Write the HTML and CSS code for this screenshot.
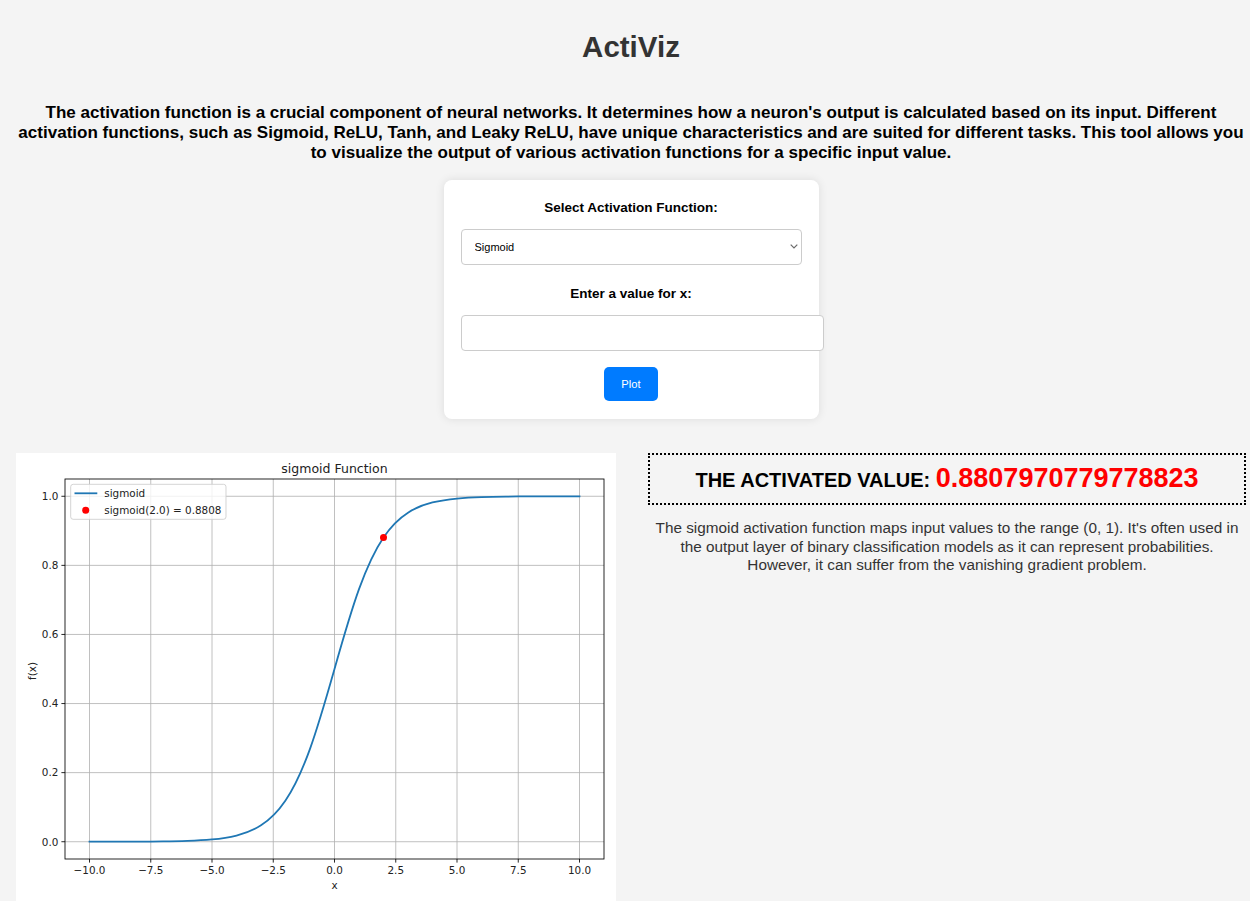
FILE: index.html
```html
<!DOCTYPE html>
<html lang="en">
<head>
<meta charset="utf-8">
<title>ActiViz</title>
<link rel="stylesheet" href="styles.css">
</head>
<body>
<div class="page">
  <h1 class="title">ActiViz</h1>
  <p class="intro">The activation function is a crucial component of neural networks. It determines how a neuron's output is calculated based on its input. Different activation functions, such as Sigmoid, ReLU, Tanh, and Leaky ReLU, have unique characteristics and are suited for different tasks. This tool allows you to visualize the output of various activation functions for a specific input value.</p>

  <form class="card">
    <label class="field-label" for="fn">Select Activation Function:</label>
    <div class="select-wrap">
      <select id="fn" class="select">
        <option>Sigmoid</option>
        <option>ReLU</option>
        <option>Tanh</option>
        <option>Leaky ReLU</option>
      </select>
      <svg class="chevron" width="8" height="5" viewBox="0 0 8 5"><path d="M0.7,0.7 L4,4 L7.3,0.7" fill="none" stroke="#6b6b6b" stroke-width="1.2"/></svg>
    </div>
    <label class="field-label" for="xval">Enter a value for x:</label>
    <input id="xval" class="text-input" type="text">
    <button type="button" class="plot-btn">Plot</button>
  </form>

  <div class="results">
    <div class="plot">
      <svg class="chart" width="600" height="450" viewBox="0 0 600 450">
        <rect x="0" y="0" width="600" height="450" fill="#ffffff"/>
        <g class="grid" stroke="#b0b0b0" stroke-width="0.8">
          <line x1="73.5" y1="26" x2="73.5" y2="406"/>
          <line x1="134.75" y1="26" x2="134.75" y2="406"/>
          <line x1="196" y1="26" x2="196" y2="406"/>
          <line x1="257.25" y1="26" x2="257.25" y2="406"/>
          <line x1="318.5" y1="26" x2="318.5" y2="406"/>
          <line x1="379.75" y1="26" x2="379.75" y2="406"/>
          <line x1="441" y1="26" x2="441" y2="406"/>
          <line x1="502.25" y1="26" x2="502.25" y2="406"/>
          <line x1="563.5" y1="26" x2="563.5" y2="406"/>
          <line x1="49" y1="388.73" x2="588" y2="388.73"/>
          <line x1="49" y1="319.64" x2="588" y2="319.64"/>
          <line x1="49" y1="250.55" x2="588" y2="250.55"/>
          <line x1="49" y1="181.45" x2="588" y2="181.45"/>
          <line x1="49" y1="112.36" x2="588" y2="112.36"/>
          <line x1="49" y1="43.27" x2="588" y2="43.27"/>
        </g>
        <path fill="none" stroke="#1f77b4" stroke-width="1.8" stroke-linecap="square" d="M73.5,388.711 C81.67,388.706 89.83,388.698 98,388.684 C106.17,388.670 114.33,388.650 122.5,388.611 C130.67,388.572 138.83,388.517 147,388.412 C155.17,388.307 163.33,388.157 171.5,387.873 C179.67,387.589 187.83,387.181 196,386.415 C204.17,385.650 212.33,384.548 220.5,382.514 C228.67,380.480 236.83,377.546 245,372.344 C253.17,367.142 261.33,359.638 269.5,347.548 C277.67,335.458 285.83,318.460 294,295.820 C302.17,273.180 310.33,244.788 318.5,216 C326.67,187.212 334.83,158.819 343,136.179 C351.17,113.539 359.33,96.542 367.5,84.452 C375.67,72.362 383.83,64.858 392,59.656 C400.17,54.454 408.33,51.520 416.5,49.486 C424.67,47.452 432.83,46.351 441,45.585 C449.17,44.820 457.33,44.411 465.5,44.127 C473.67,43.843 481.83,43.692 490,43.587 C498.17,43.482 506.33,43.427 514.5,43.388 C522.67,43.349 530.83,43.329 539,43.315 C547.17,43.301 555.33,43.293 563.5,43.288"/>
        <circle cx="367.5" cy="84.45" r="3.5" fill="#ff0000"/>
        <rect x="49" y="26" width="539" height="380" fill="none" stroke="#000000" stroke-width="0.85"/>
        <g class="ticks" stroke="#000000" stroke-width="0.85">
          <line x1="73.5" y1="406" x2="73.5" y2="409.6"/>
          <line x1="134.75" y1="406" x2="134.75" y2="409.6"/>
          <line x1="196" y1="406" x2="196" y2="409.6"/>
          <line x1="257.25" y1="406" x2="257.25" y2="409.6"/>
          <line x1="318.5" y1="406" x2="318.5" y2="409.6"/>
          <line x1="379.75" y1="406" x2="379.75" y2="409.6"/>
          <line x1="441" y1="406" x2="441" y2="409.6"/>
          <line x1="502.25" y1="406" x2="502.25" y2="409.6"/>
          <line x1="563.5" y1="406" x2="563.5" y2="409.6"/>
          <line x1="45.4" y1="388.73" x2="49" y2="388.73"/>
          <line x1="45.4" y1="319.64" x2="49" y2="319.64"/>
          <line x1="45.4" y1="250.55" x2="49" y2="250.55"/>
          <line x1="45.4" y1="181.45" x2="49" y2="181.45"/>
          <line x1="45.4" y1="112.36" x2="49" y2="112.36"/>
          <line x1="45.4" y1="43.27" x2="49" y2="43.27"/>
        </g>
        <g class="xtick-labels" text-anchor="middle">
          <text x="73.5" y="421">−10.0</text>
          <text x="134.75" y="421">−7.5</text>
          <text x="196" y="421">−5.0</text>
          <text x="257.25" y="421">−2.5</text>
          <text x="318.5" y="421">0.0</text>
          <text x="379.75" y="421">2.5</text>
          <text x="441" y="421">5.0</text>
          <text x="502.25" y="421">7.5</text>
          <text x="563.5" y="421">10.0</text>
        </g>
        <g class="ytick-labels" text-anchor="end">
          <text x="42.3" y="392.5">0.0</text>
          <text x="42.3" y="323.4">0.2</text>
          <text x="42.3" y="254.3">0.4</text>
          <text x="42.3" y="185.2">0.6</text>
          <text x="42.3" y="116.1">0.8</text>
          <text x="42.3" y="47">1.0</text>
        </g>
        <text class="axis-title" x="318.5" y="20.3" text-anchor="middle">sigmoid Function</text>
        <text class="axis-label" x="318.5" y="436" text-anchor="middle">x</text>
        <text class="axis-label" x="20" y="218" text-anchor="middle" transform="rotate(-90 20 218)">f(x)</text>
        <rect x="54.7" y="31.3" width="155.3" height="35" rx="2.5" fill="#ffffff" fill-opacity="0.8" stroke="#cccccc" stroke-width="0.85"/>
        <line x1="58.5" y1="40.3" x2="81.3" y2="40.3" stroke="#1f77b4" stroke-width="1.8"/>
        <text class="legend-text" x="88.3" y="43.8">sigmoid</text>
        <circle cx="69.7" cy="57.3" r="3.5" fill="#ff0000"/>
        <text class="legend-text" x="88.3" y="60.8">sigmoid(2.0) = 0.8808</text>
      </svg>
    </div>
    <div class="result">
      <div class="value-box"><span class="value-label">THE ACTIVATED VALUE: </span><span class="value-num">0.8807970779778823</span></div>
      <p class="desc">The sigmoid activation function maps input values to the range (0, 1). It's often used in the output layer of binary classification models as it can represent probabilities. However, it can suffer from the vanishing gradient problem.</p>
    </div>
  </div>
</div>
</body>
</html>
```

FILE: styles.css
```css
html, body {
  margin: 0;
  padding: 0;
}

body {
  background: #f4f4f4;
  font-family: "Liberation Sans", Arial, sans-serif;
  color: #000;
}

.page {
  padding: 0 0 0 12px;
}

.title {
  margin: 30px 0 0;
  font-size: 29.5px;
  line-height: 33px;
  font-weight: bold;
  color: #333;
  text-align: center;
}

.intro {
  margin: 40px 0 17px;
  font-size: 17.05px;
  line-height: 20px;
  font-weight: bold;
  text-align: center;
  color: #000;
}

.card {
  width: 375px;
  box-sizing: border-box;
  margin: 0 auto;
  padding: 20px 17px 18px;
  background: #fff;
  border-radius: 8px;
  box-shadow: 0 0 10px rgba(0, 0, 0, 0.1);
  text-align: center;
}

.field-label {
  display: block;
  font-size: 13.5px;
  line-height: 16px;
  font-weight: bold;
  margin-bottom: 13px;
}

.select-wrap {
  position: relative;
  margin-bottom: 21px;
}

.select {
  display: block;
  width: 100%;
  height: 36px;
  box-sizing: border-box;
  padding: 0 10px 0 13px;
  margin: 0;
  font-family: "Liberation Sans", Arial, sans-serif;
  font-size: 11px;
  color: #000;
  background: #fff;
  border: 1px solid #ccc;
  border-radius: 4px;
  appearance: none;
  -webkit-appearance: none;
}

.chevron {
  position: absolute;
  right: 4px;
  top: 15px;
  pointer-events: none;
}

.text-input {
  display: block;
  width: 100%;
  height: 34px;
  box-sizing: content-box;
  padding: 0 10px;
  margin: 0;
  font-family: "Liberation Sans", Arial, sans-serif;
  font-size: 11px;
  background: #fff;
  border: 1px solid #ccc;
  border-radius: 4px;
}

.plot-btn {
  margin-top: 16px;
  padding: 10px 17px;
  font-family: "Liberation Sans", Arial, sans-serif;
  font-size: 11.2px;
  line-height: 14px;
  color: #fff;
  background: #007bff;
  border: none;
  border-radius: 5px;
}

.results {
  display: flex;
  align-items: flex-start;
  gap: 32px;
  padding: 0 4px;
  margin-top: 34px;
}

.plot {
  flex: none;
  width: 600px;
  height: 450px;
  background: #fff;
}

.chart {
  display: block;
}

.chart text {
  font-family: "DejaVu Sans", sans-serif;
  fill: #222;
}

.xtick-labels text,
.ytick-labels text {
  font-size: 10.4px;
}

.axis-title {
  font-size: 12.5px;
}

.axis-label {
  font-size: 10.4px;
}

.legend-text {
  font-size: 10.4px;
}

.result {
  flex: 1;
  min-width: 0;
}

.value-box {
  border: 2px dotted #000;
  padding: 8px 0 6px;
  text-align: center;
  font-weight: bold;
  line-height: 31px;
}

.value-label {
  font-size: 20px;
  color: #000;
}

.value-num {
  font-size: 27px;
  color: #ff0000;
}

.desc {
  margin: 14px 0 0;
  padding: 0 4px;
  font-size: 15.3px;
  line-height: 18.5px;
  color: #333;
  text-align: center;
}
```
